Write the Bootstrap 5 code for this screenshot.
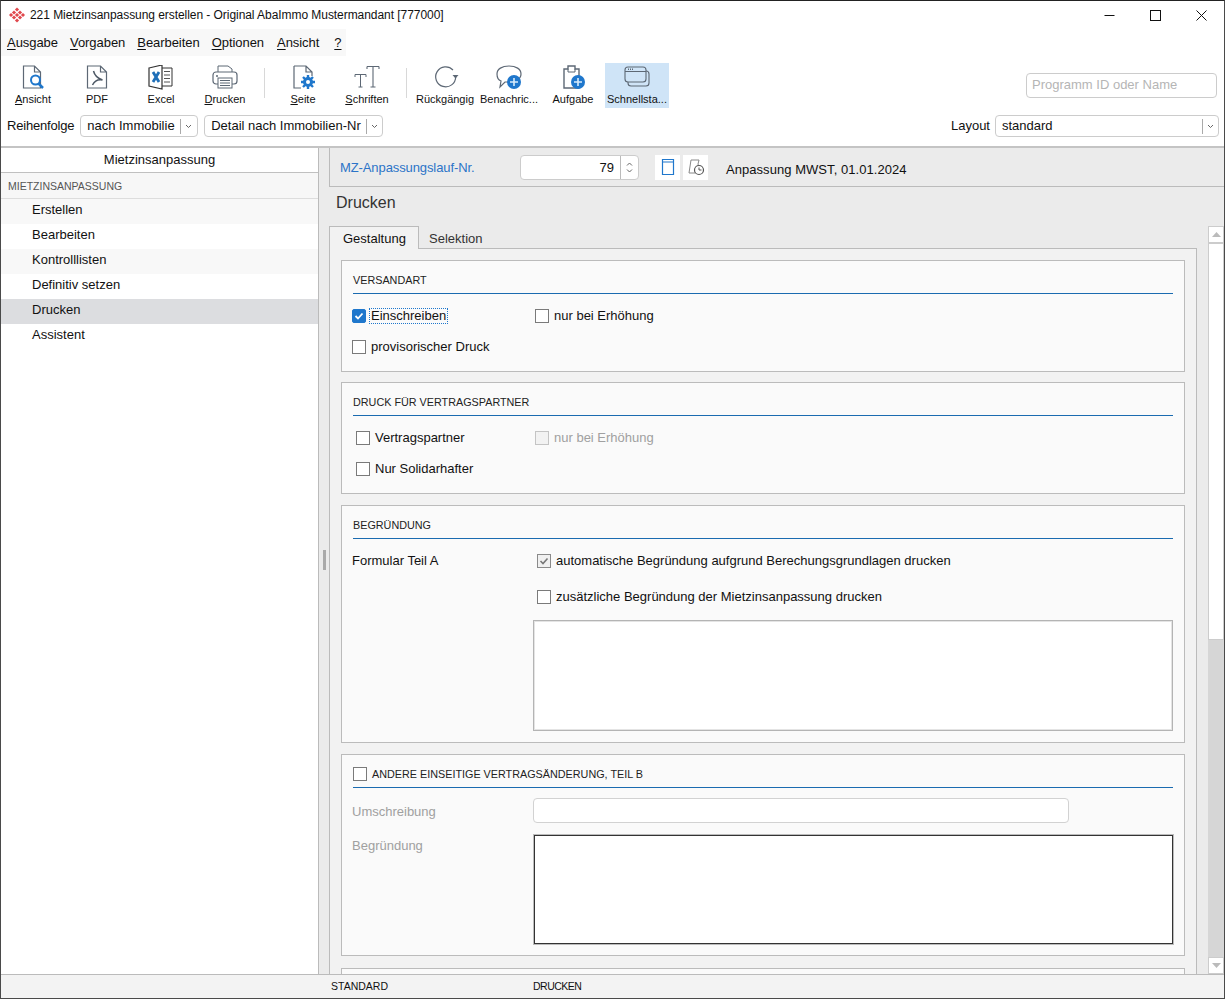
<!doctype html>
<html lang="de">
<head>
<meta charset="utf-8">
<title>221 Mietzinsanpassung erstellen</title>
<link href="https://cdn.jsdelivr.net/npm/bootstrap@5.3.0/dist/css/bootstrap.min.css" rel="stylesheet">
<style>
html,body{height:999px;overflow:hidden}
body{font-family:"Liberation Sans",Arial,sans-serif;font-size:12px;line-height:14px;color:#111;background:#fff}
.app-win{width:1225px;height:999px;border:1px solid #4a4a4a;border-top:1px solid #222;display:flex;flex-direction:column;overflow:hidden;background:#fff}
.title-bar{height:28px;flex:none;padding-left:8px}
.title-txt{margin-left:5px;letter-spacing:-.055px}
.win-btns{margin-left:auto}
.win-btn{width:46px;height:28px;display:flex;align-items:center;justify-content:center}
.menu-bar{height:27px;flex:none;width:345px;background:#f8f8f8;padding-left:6px;gap:12px;font-size:13px;letter-spacing:-.05px}
.menu-bar u{text-underline-offset:2px}
.menu-bar span:nth-child(5){margin-left:1px}
.menu-bar span:last-child{margin-left:3px}
.tool-bar{height:49px;flex:none;margin-top:7px;position:relative}
.tool-item{width:64px;height:45px;display:flex;flex-direction:column;align-items:center;font-size:11px;line-height:13px;padding-top:2px;white-space:nowrap}
.tool-item svg{height:27px;width:32px;margin-bottom:1px}
.tool-item.is-active{background:#cfe4f7}
.tool-sep{width:1px;height:30px;background:#d8d8d8;margin:5px 6px 0 7px}
.search-box{position:absolute;right:7px;top:10px;width:191px;height:25px;border:1px solid #ccc;border-radius:4px;color:#b5b5b5;padding:4px 5px;font-size:13px}
.filter-bar{height:27px;flex:none;padding:1px 5px 0 6px;font-size:13px}
.order-lbl{letter-spacing:-.2px;margin-right:6px}
.combo-box{height:22px;border:1px solid #ccc;border-radius:4px;display:flex;align-items:center;padding-left:6px;font-size:13px;background:#fff}
.combo-first{padding-left:6px;width:118px}
.combo-gap{margin-left:6px}
.combo-arrow{width:16px;height:15px;border-left:1px solid #aaa;margin-left:5px;display:flex;align-items:center;justify-content:center}
.layout-lbl{margin-left:auto}
.layout-combo{width:224px;margin-left:5px;justify-content:space-between}
.main-area{flex:1;min-height:0;border-top:2px solid #c4c4c4;display:flex;margin-top:7px}
.side-pane{width:318px;flex:none;background:#fff;border-right:1px solid #bbb}
.side-head{height:25px;border-bottom:1px solid #c0c0c0;text-align:center;font-size:13px;line-height:23px}
.side-group{height:26px;background:#f7f7f7;border-bottom:1px solid #ddd;padding-left:7px;line-height:27px;color:#555;font-size:10.5px}
.side-row{height:25px;padding-left:31px;line-height:21px;font-size:13px}
.side-row.is-odd{background:#f8f8f8}
.side-row.is-sel{background:#dcdde0}
.split-bar{width:10px;flex:none;background:#ebebeb;display:flex;align-items:center;justify-content:center}
.split-grip{width:3px;height:20px;background:#aaa;margin-top:-2px}
.work-pane{flex:1;min-width:0;background:#ebebeb;display:flex;flex-direction:column}
.lauf-head{height:39px;flex:none;border:1px solid #bbb;border-top:0;border-right:0;padding-left:10px;background:#ebebeb}
.lauf-lbl{width:180px;color:#2b74c8;font-size:13px;letter-spacing:-.1px;padding-top:2px}
.spin-box{width:119px;height:25px;background:#fff;border:1px solid #ccc;border-radius:4px;display:flex;font-size:13px;align-items:center;justify-content:flex-end}
.spin-val{padding-top:2px}
.spin-arrows{width:18px;height:23px;border-left:1px solid #bbb;margin-left:6px;display:flex;flex-direction:column;align-items:center;justify-content:center;gap:3px}
.ico-btn{width:25px;height:25px;background:#fff;display:flex;align-items:center;justify-content:center;margin-left:3px}
.ico-first{margin-left:16px}
.lauf-txt{margin-left:18px;font-size:13px;letter-spacing:.05px;padding-top:6px}
.page-title{height:39px;flex:none;padding:7px 0 0 7px;font-size:16px;line-height:18px;color:#333}
.tab-strip{height:22px;flex:none;display:flex}
.tab-on{width:90px;height:23px;border:1px solid #bbb;border-bottom:0;background:#f2f2f2;padding:5px 0 0 13px;font-size:13px;position:relative;z-index:1}
.tab-off{padding:6px 0 0 10px;font-size:13px;color:#333}
.tab-body{flex:1;min-height:0;display:flex}
.tab-pane-box{width:868px;flex:none;background:#f2f2f2;border:1px solid #bbb;border-bottom:0;padding:11px 11px 0;overflow:hidden}
.form-grp{background:#fafafa;border:1px solid #bbb;padding:0 11px 11px;width:844px}
.grp-a{margin-bottom:10px;padding-bottom:13px}
.grp-b{margin-bottom:11px;padding-bottom:13px}
.grp-c{margin-bottom:11px}
.grp-d{margin-bottom:12px}
.grp-e{height:40px}
.grp-title{height:33px;border-bottom:1px solid #1a6bb0;font-size:10.8px;padding-top:12px;line-height:14px;margin-bottom:11px;color:#222}
.grp-title.is-flush{display:flex;align-items:center;padding-top:5px;margin-bottom:10px}
.grp-title.is-flush .cbx{margin-left:0}
.c-row{display:flex;align-items:center;font-size:13px;height:22px}
.mb-row{margin-bottom:9px}
.c-col{width:182px;display:flex;align-items:center}
.inset-col{padding-left:4px}
.cbx{width:14px;height:14px;border:1px solid #7a7a7a;background:#fff;flex:none;margin:0 5px 0 -1px;display:flex;align-items:center;justify-content:center}
.c-col+.c-col .cbx{margin-left:0}
.cbx.is-on{background:#1f77cc;border-color:#1f77cc;border-radius:2px}
.cbx.is-mute{border-color:#c4c4c4;background:#f2f2f2}
.cbx.is-gray{border-color:#8a8a8a;background:#f0f0f0}
.txt-mute{color:#a0a0a0}
.focus-lbl{outline:1px dotted #1f77cc;padding:0 1px;margin-left:-1px}
.form-lbl{width:181px;margin-left:-1px;font-size:13px;flex:none}
.lbl-a{padding-top:4px}
.lbl-um{padding-top:2px}
.pt-begr{padding-top:4px}
.c-in{margin-left:5px}
.second-c{margin-top:14px}
.plain-input{height:25px;width:536px;border:1px solid #d2d2d2;border-radius:4px;background:#fff}
.memo-a{height:111px;width:640px;border:1px solid #b4b4b4;background:#fff;margin-top:12px;box-shadow:inset 0 0 0 1px #e4e4e4}
.row-memo{margin-top:12px}
.memo-b{height:109px;width:639px;margin-left:1px;background:#fff;border:1px solid #333;box-shadow:0 0 0 1px #bbb}
.scroll-col{width:16px;margin-left:11px;flex:none;display:flex;flex-direction:column;background:#d6d6d6;margin-top:-22px}
.scroll-btn{height:17px;background:#fff;border:1px solid #ccc;display:flex;align-items:center;justify-content:center;flex:none}
.scroll-thumb{height:397px;background:#fff;border:1px solid #ccc;flex:none}
.status-line{height:24px;flex:none;border-top:1px solid #bbb;background:#f3f3f3;font-size:10.5px;line-height:23px;padding-left:330px}
.status-a{width:202px}
.status-b{letter-spacing:-.5px}
</style>
</head>
<body>
<div class="app-win">
  <div class="title-bar d-flex align-items-center">
    <svg width="16" height="16" viewBox="0 0 16 16"><g fill="#e0474c"><rect x="6.500" y="1" width="3" height="3" transform="rotate(45 8 2.500)"/><rect x="3.500" y="4" width="3" height="3" transform="rotate(45 5 5.500)"/><rect x="9.500" y="4" width="3" height="3" transform="rotate(45 11 5.500)"/><rect x="0.500" y="6.500" width="3" height="3" transform="rotate(45 2 8)"/><rect x="6.500" y="6.500" width="3" height="3" transform="rotate(45 8 8)"/><rect x="12.500" y="6.500" width="3" height="3" transform="rotate(45 14 8)"/><rect x="3.500" y="9" width="3" height="3" transform="rotate(45 5 10.500)"/><rect x="9.500" y="9" width="3" height="3" transform="rotate(45 11 10.500)"/><rect x="6.500" y="12" width="3" height="3" transform="rotate(45 8 13.500)"/></g></svg>
    <span class="title-txt">221 Mietzinsanpassung erstellen - Original AbaImmo Mustermandant [777000]</span>
    <div class="win-btns d-flex">
      <div class="win-btn"><svg width="11" height="11" viewBox="0 0 11 11"><path d="M0.500 5.500h10" stroke="#111"/></svg></div>
      <div class="win-btn"><svg width="11" height="11" viewBox="0 0 11 11"><rect x=".5" y=".5" width="10" height="10" fill="none" stroke="#111"/></svg></div>
      <div class="win-btn"><svg width="11" height="11" viewBox="0 0 11 11"><path d="M.5.5l10 10M10.500.5l-10 10" stroke="#111"/></svg></div>
    </div>
  </div>
  <div class="menu-bar d-flex align-items-center">
    <span><u>A</u>usgabe</span><span><u>V</u>orgaben</span><span><u>B</u>earbeiten</span><span><u>O</u>ptionen</span><span><u>A</u>nsicht</span><span><u>?</u></span>
  </div>
  <div class="tool-bar d-flex">
    <div class="tool-item"><svg viewBox="0 0 32 27"><path d="M6.500 1h11l6 6v16h-17z M17.500 1v6h6" fill="#fff" stroke="#5d6875" stroke-width="1.200"/><circle cx="18.500" cy="15" r="4.500" fill="#fff" stroke="#1f77cc" stroke-width="2"/><path d="M21.500 18.500l4.500 4.500" stroke="#1f77cc" stroke-width="2.500"/></svg><span><u>A</u>nsicht</span></div>
    <div class="tool-item"><svg viewBox="0 0 32 27"><path d="M6.500 1h13l6 6v16h-19z M19.500 1v6h6" fill="#fff" stroke="#5d6875" stroke-width="1.200"/><path d="M12.500 6c1 4 3 7 9 9-5-1-8 1-10 5" fill="none" stroke="#4d5865" stroke-width="1.500"/></svg><span>PDF</span></div>
    <div class="tool-item"><svg viewBox="0 0 32 27"><path d="M16 3h11v18H16" fill="#fff" stroke="#333"/><path d="M19 6.500h6M19 10h6M19 13.500h6M19 17h6" stroke="#555"/><path d="M4 3l13-3v24L4 21z" fill="#fff" stroke="#333" stroke-width="1.200"/><path d="M8 7l6 10M14 7L8 17" stroke="#1f6fb8" stroke-width="2.800"/></svg><span>Excel</span></div>
    <div class="tool-item"><svg viewBox="0 0 32 27"><path d="M9 7V1h10l4 3v3" fill="#fff" stroke="#5d6875"/><rect x="4" y="7" width="24" height="12" rx="3" fill="#fff" stroke="#5d6875" stroke-width="1.200"/><rect x="9" y="13" width="14" height="10" fill="#fff" stroke="#5d6875"/><path d="M11 15.500h10M11 18h10M11 20.500h10" stroke="#5d6875"/><circle cx="8" cy="11" r="1" fill="#5d6875"/></svg><span><u>D</u>rucken</span></div>
    <div class="tool-sep"></div>
    <div class="tool-item"><svg viewBox="0 0 32 27"><path d="M7 1h12l6 6v4 M19 1v6h6 M7 1v22h7" fill="none" stroke="#5d6875" stroke-width="1.200"/><circle cx="21" cy="17" r="5" fill="#1f77cc"/><path d="M21 10v14M14 17h14M16 12l10 10M26 12L16 22" stroke="#1f77cc" stroke-width="2.400"/><circle cx="21" cy="17" r="2" fill="#fff"/></svg><span><u>S</u>eite</span></div>
    <div class="tool-item"><svg viewBox="0 0 32 27"><path d="M4 9.500h11M9.500 9.500V22M7.500 22h4M4 12V9.500M15 12V9.500" stroke="#5d6875" fill="none"/><path d="M16 1.500h12M22 1.500V22M19.500 22h5M16 4V1.500M28 4V1.500" stroke="#5d6875" fill="none" stroke-width="1.100"/></svg><span><u>S</u>chriften</span></div>
    <div class="tool-sep"></div>
    <div class="tool-item"><svg viewBox="0 0 32 27"><path d="M24 5a10 10 0 1 0 2.700 7" fill="none" stroke="#5d6875" stroke-width="1.200"/><path d="M23.500 10h6l-3 3.500z" fill="#5d6875"/></svg><span>Rückgängig</span></div>
    <div class="tool-item"><svg viewBox="0 0 32 27"><path d="M16 1c7 0 12 3 12 8s-5 8-12 8c-2 0-3 0-4 0l-5 5 1-6c-3-1-4-4-4-7 0-5 5-8 12-8z" fill="#fff" stroke="#5d6875" stroke-width="1.200"/><circle cx="21" cy="17" r="7" fill="#1f77cc"/><path d="M17 17h8M21 13v8" stroke="#d8ebfb" stroke-width="1.600"/></svg><span>Benachric...</span></div>
    <div class="tool-item"><svg viewBox="0 0 32 27"><path d="M7 4h4V1h7v3h4v19H7z" fill="#fff" stroke="#5d6875" stroke-width="1.400"/><path d="M11 4v3h7V4" fill="none" stroke="#5d6875"/><circle cx="21" cy="17" r="7" fill="#1f77cc"/><path d="M17 17h8M21 13v8" stroke="#d8ebfb" stroke-width="1.600"/></svg><span>Aufgabe</span></div>
    <div class="tool-item is-active"><svg viewBox="0 0 32 27"><rect x="7" y="6" width="21" height="15" rx="3" fill="none" stroke="#5d6875" stroke-width="1.100"/><rect x="4" y="2" width="21" height="15" rx="3" fill="#cfe4f7" stroke="#5d6875" stroke-width="1.100"/><path d="M4 6.500h21" stroke="#5d6875"/><path d="M7 4.300h5" stroke="#5d6875" stroke-width="1.500" stroke-dasharray="1 1"/></svg><span>Schnellsta...</span></div>
    <div class="search-box">Programm ID oder Name</div>
  </div>
  <div class="filter-bar d-flex align-items-center">
    <span class="order-lbl">Reihenfolge</span>
    <div class="combo-box combo-first"><span>nach Immobilie</span><span class="combo-arrow"><svg width="7" height="5" viewBox="0 0 7 5"><path d="M1 1l2.500 2.500L6 1" fill="none" stroke="#666"/></svg></span></div>
    <div class="combo-box combo-gap"><span>Detail nach Immobilien-Nr</span><span class="combo-arrow"><svg width="7" height="5" viewBox="0 0 7 5"><path d="M1 1l2.500 2.500L6 1" fill="none" stroke="#666"/></svg></span></div>
    <span class="layout-lbl">Layout</span>
    <div class="combo-box layout-combo"><span>standard</span><span class="combo-arrow"><svg width="7" height="5" viewBox="0 0 7 5"><path d="M1 1l2.500 2.500L6 1" fill="none" stroke="#666"/></svg></span></div>
  </div>
  <div class="main-area">
    <div class="side-pane">
      <div class="side-head">Mietzinsanpassung</div>
      <div class="side-group">MIETZINSANPASSUNG</div>
      <div class="side-row is-odd">Erstellen</div>
      <div class="side-row">Bearbeiten</div>
      <div class="side-row is-odd">Kontrolllisten</div>
      <div class="side-row">Definitiv setzen</div>
      <div class="side-row is-sel">Drucken</div>
      <div class="side-row">Assistent</div>
    </div>
    <div class="split-bar"><div class="split-grip"></div></div>
    <div class="work-pane">
      <div class="lauf-head d-flex align-items-center">
        <span class="lauf-lbl">MZ-Anpassungslauf-Nr.</span>
        <div class="spin-box"><span class="spin-val">79</span><div class="spin-arrows"><svg width="7" height="4" viewBox="0 0 7 4"><path d="M1 3.500l2.500-2.500L6 3.500" fill="none" stroke="#666"/></svg><svg width="7" height="4" viewBox="0 0 7 4"><path d="M1 .5l2.500 2.500L6 .5" fill="none" stroke="#666"/></svg></div></div>
        <div class="ico-btn ico-first"><svg width="14" height="18" viewBox="0 0 14 18"><path d="M1.500 1.500h11v15h-11zM1.500 4h11" fill="none" stroke="#1f77cc" stroke-width="1.200"/></svg></div>
        <div class="ico-btn"><svg width="18" height="18" viewBox="0 0 18 18"><path d="M4 2h8l-1 4 1 4M4 2l-2 13h6" fill="none" stroke="#888"/><circle cx="12" cy="12" r="4.500" fill="#fff" stroke="#555" stroke-width="1.200"/><path d="M12 9.500V12h2.500" fill="none" stroke="#555"/></svg></div>
        <span class="lauf-txt">Anpassung MWST, 01.01.2024</span>
      </div>
      <div class="page-title">Drucken</div>
      <div class="tab-strip"><div class="tab-on">Gestaltung</div><div class="tab-off">Selektion</div></div>
      <div class="tab-body">
        <div class="tab-pane-box">
          <div class="form-grp grp-a">
            <div class="grp-title">VERSANDART</div>
            <div class="c-row mb-row"><div class="c-col"><span class="cbx is-on"><svg width="10" height="8" viewBox="0 0 10 8"><path d="M1.500 4l2.500 2.500L8.500 1.500" fill="none" stroke="#fff" stroke-width="1.800"/></svg></span><span class="focus-lbl">Einschreiben</span></div><div class="c-col"><span class="cbx"></span><span>nur bei Erhöhung</span></div></div>
            <div class="c-row"><div class="c-col"><span class="cbx"></span><span>provisorischer Druck</span></div></div>
          </div>
          <div class="form-grp grp-b">
            <div class="grp-title">DRUCK FÜR VERTRAGSPARTNER</div>
            <div class="c-row mb-row"><div class="c-col inset-col"><span class="cbx"></span><span>Vertragspartner</span></div><div class="c-col"><span class="cbx is-mute"></span><span class="txt-mute">nur bei Erhöhung</span></div></div>
            <div class="c-row"><div class="c-col inset-col"><span class="cbx"></span><span>Nur Solidarhafter</span></div></div>
          </div>
          <div class="form-grp grp-c">
            <div class="grp-title">BEGRÜNDUNG</div>
            <div class="d-flex">
              <div class="form-lbl lbl-a">Formular Teil A</div>
              <div>
                <div class="c-row c-in"><span class="cbx is-gray"><svg width="10" height="8" viewBox="0 0 10 8"><path d="M1.500 4l2.500 2.500L8.500 1.500" fill="none" stroke="#777" stroke-width="1.600"/></svg></span><span>automatische Begründung aufgrund Berechungsgrundlagen drucken</span></div>
                <div class="c-row c-in second-c"><span class="cbx"></span><span>zusätzliche Begründung der Mietzinsanpassung drucken</span></div>
                <div class="memo-a"></div>
              </div>
            </div>
          </div>
          <div class="form-grp grp-d">
            <div class="grp-title is-flush"><span class="cbx"></span><span>ANDERE EINSEITIGE VERTRAGSÄNDERUNG, TEIL B</span></div>
            <div class="d-flex align-items-center"><div class="form-lbl txt-mute lbl-um">Umschreibung</div><div class="plain-input"></div></div>
            <div class="d-flex row-memo"><div class="form-lbl txt-mute pt-begr">Begründung</div><div class="memo-b"></div></div>
          </div>
          <div class="form-grp grp-e"></div>
        </div>
        <div class="scroll-col">
          <div class="scroll-btn"><svg width="9" height="5" viewBox="0 0 9 5"><path d="M0 5l4.500-5L9 5z" fill="#bbb"/></svg></div>
          <div class="scroll-thumb"></div>
          <div class="flex-grow-1"></div>
          <div class="scroll-btn"><svg width="9" height="5" viewBox="0 0 9 5"><path d="M0 0l4.500 5L9 0z" fill="#bbb"/></svg></div>
        </div>
      </div>
    </div>
  </div>
  <div class="status-line d-flex"><span class="status-a">STANDARD</span><span class="status-b">DRUCKEN</span></div>
</div>
</body>
</html>
